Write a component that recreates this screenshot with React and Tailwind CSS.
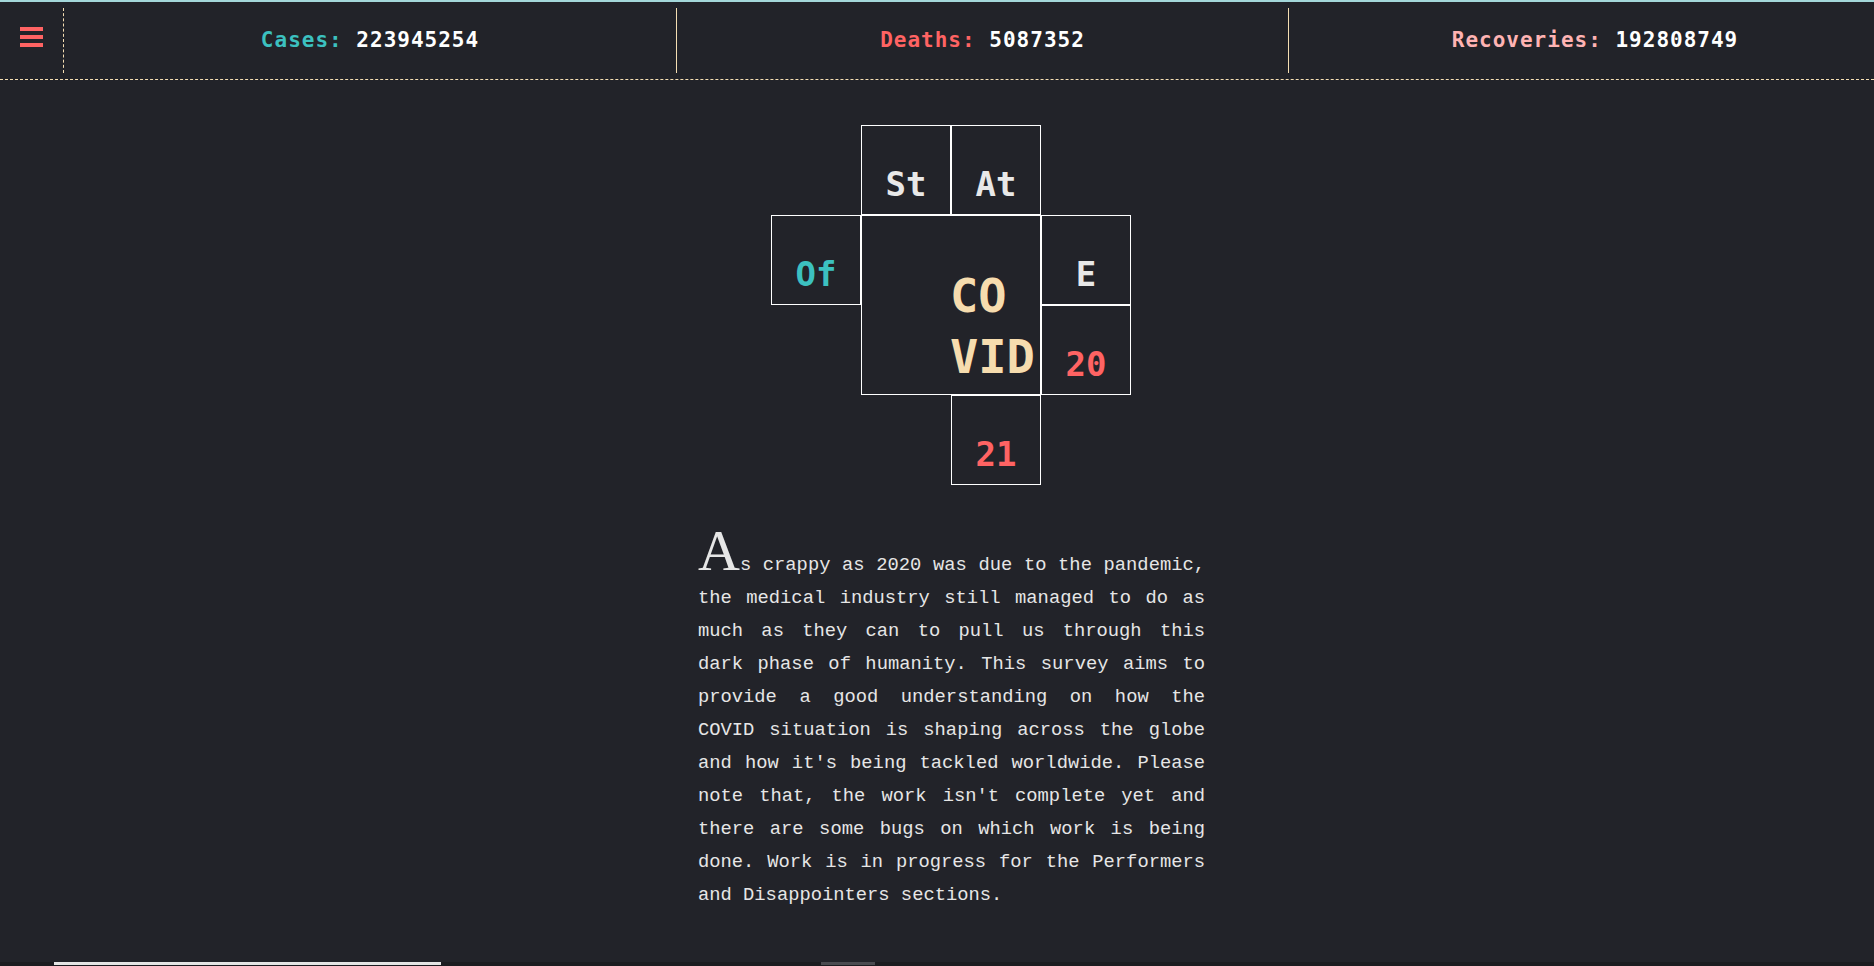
const mono = { fontFamily: '"DejaVu Sans Mono", "Liberation Mono", monospace' };

const stats = [
  { label: "Cases:", value: "223945254", color: "text-[#3cc1c0]", border: true, w: "w-[613px]" },
  { label: "Deaths:", value: "5087352", color: "text-[#ff6363]", border: true, w: "w-[612px]" },
  { label: "Recoveries:", value: "192808749", color: "text-[#ffb3b3]", border: false, w: "w-[612px]" },
];

const Header = () => (
  <>
    <div className="h-[2px] bg-[#a4d7da]" />
    <header className="flex h-[78px] border-b border-dashed border-b-[#f5deb3] py-[6px] overflow-hidden">
      <div className="w-[64px] shrink-0 h-full border-r border-dashed border-r-[#f5deb3] flex flex-col gap-[4px] pl-[20px] pt-[19px]">
        <span className="block w-[23px] h-[4px] bg-[#ff6363]" />
        <span className="block w-[23px] h-[4px] bg-[#ff6363]" />
        <span className="block w-[23px] h-[4px] bg-[#ff6363]" />
      </div>
      {stats.map((s) => (
        <div
          key={s.label}
          className={`${s.w} shrink-0 h-full flex items-center justify-center ${s.border ? "border-r border-r-[#f5deb3]" : ""}`}
        >
          <p className="text-[21px] font-bold tracking-[1px] leading-none" style={mono}>
            <span className={s.color}>{s.label}</span> <span className="text-white">{s.value}</span>
          </p>
        </div>
      ))}
    </header>
  </>
);

const Box = ({ pos, color, children }) => (
  <div className={`${pos} border border-white flex justify-center pt-[41px]`}>
    <span className={`text-[34px] font-bold leading-none ${color}`} style={mono}>
      {children}
    </span>
  </div>
);

const Title = () => (
  <div className="grid grid-cols-[repeat(4,90px)] grid-rows-[repeat(4,90px)]">
    <Box pos="col-start-2 row-start-1" color="text-[#e8e8e8]">St</Box>
    <Box pos="col-start-3 row-start-1" color="text-[#e8e8e8]">At</Box>
    <Box pos="col-start-1 row-start-2" color="text-[#3cc1c0]">Of</Box>
    <div className="col-start-2 col-span-2 row-start-2 row-span-2 border border-white pl-[88px] pt-[49px]">
      <p className="text-[47px] font-bold leading-[61px] text-[#f6dcae]" style={mono}>
        CO
        <br />
        VID
      </p>
    </div>
    <Box pos="col-start-4 row-start-2" color="text-[#e8e8e8]">E</Box>
    <Box pos="col-start-4 row-start-3" color="text-[#ff6363]">20</Box>
    <Box pos="col-start-3 row-start-4" color="text-[#ff6363]">21</Box>
  </div>
);

export default function App() {
  return (
    <div className="min-h-screen bg-[#222329] overflow-hidden">
      <Header />
      <main className="flex flex-col items-center pl-[28px] pt-[45px]">
        <Title />
        <p
          className="w-[507px] ml-[1px] mt-[49px] text-[18.8px] leading-[33px] text-justify text-[#e6e6e6]"
          style={{ fontFamily: '"Liberation Mono", "Courier New", monospace' }}
        >
          <span className="text-[58px]" style={{ fontFamily: '"Liberation Serif", serif' }}>
            A
          </span>
          s crappy as 2020 was due to the pandemic, the medical industry still managed to do as much as they
          can to pull us through this dark phase of humanity. This survey aims to provide a good understanding
          on how the COVID situation is shaping across the globe and how it's being tackled worldwide. Please
          note that, the work isn't complete yet and there are some bugs on which work is being done. Work is
          in progress for the Performers and Disappointers sections.
        </p>
      </main>
      <div className="mt-[50px] h-[40px] bg-[#1b1c20] flex items-start">
        <div className="ml-[54px] w-[387px] h-[3px] bg-[#e4e4e4]" />
        <div className="ml-[380px] w-[54px] h-[3px] bg-[#4a4b50]" />
      </div>
    </div>
  );
}
